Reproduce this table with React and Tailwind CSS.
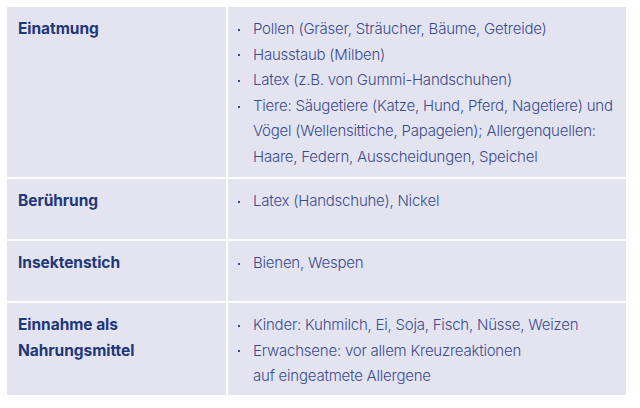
export default function App() {
  const rows = [
    {
      h: "h-[170px]",
      title: ["Einatmung"],
      items: [
        ["Pollen (Gräser, Sträucher, Bäume, Getreide)"],
        ["Hausstaub (Milben)"],
        ["Latex (z.B. von Gummi-Handschuhen)"],
        [
          "Tiere: Säugetiere (Katze, Hund, Pferd, Nagetiere) und",
          "Vögel (Wellensittiche, Papageien); Allergenquellen:",
          "Haare, Federn, Ausscheidungen, Speichel",
        ],
      ],
    },
    { h: "h-[60px]", title: ["Berührung"], items: [["Latex (Handschuhe), Nickel"]] },
    { h: "h-[60px]", title: ["Insektenstich"], items: [["Bienen, Wespen"]] },
    {
      h: "h-[92px]",
      title: ["Einnahme als", "Nahrungsmittel"],
      items: [
        ["Kinder: Kuhmilch, Ei, Soja, Fisch, Nüsse, Weizen"],
        ["Erwachsene: vor allem Kreuzreaktionen", "auf eingeatmete Allergene"],
      ],
    },
  ];
  return (
    <div className="w-[640px] h-[408px] bg-white pl-[7px] pt-[7px]" style={{ fontFamily: "Inter, 'Noto Sans', sans-serif" }}>
      <div className="w-[619px] grid grid-cols-[219px_398px] gap-[2px] bg-white">
        {rows.map((r, i) => [
          <div key={"a" + i} className={`${r.h} bg-[#e4e4f0] pl-[11px] pt-[9px] text-[15.5px] leading-[26px] font-bold text-[#1e3878] tracking-[-0.05px]`}>
            {r.title.map((t) => (
              <div key={t}>{t}</div>
            ))}
          </div>,
          <div key={"b" + i} className={`${r.h} bg-[#e4e4f0] pl-[8px] pr-[8px] pt-[9px] text-[15px] leading-[25.6px] font-light text-[#3b4c8e] tracking-[-0.22px]`}>
            {r.items.map((t) => (
              <div key={t[0]} className="flex">
                <span className="w-[17px] shrink-0 h-[25.6px] flex items-center pt-[2px]">
                  <span className="ml-[2px] w-[2px] h-[2px] bg-[#3b4c8e]" />
                </span>
                <div>
                  {t.map((l) => (
                    <div key={l} className="whitespace-nowrap">{l}</div>
                  ))}
                </div>
              </div>
            ))}
          </div>,
        ])}
      </div>
    </div>
  );
}
